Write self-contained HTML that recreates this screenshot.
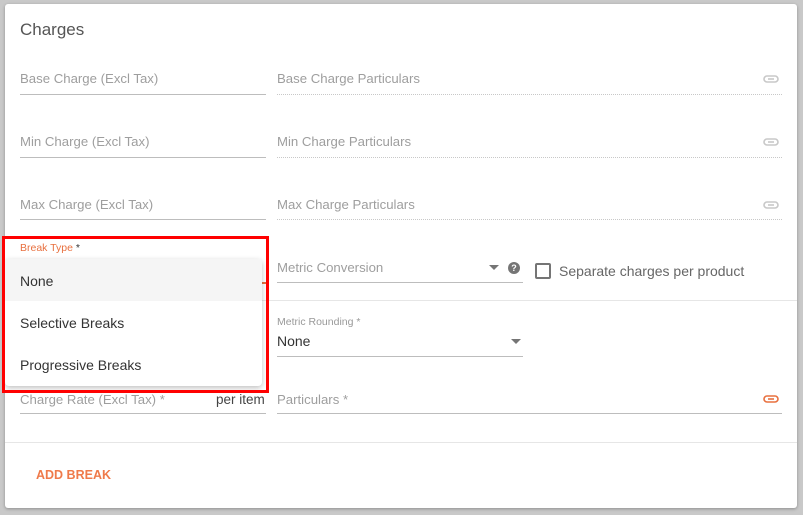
<!DOCTYPE html>
<html><head><style>
*{margin:0;padding:0;box-sizing:border-box}
body{width:803px;height:515px;background:#c9c9c9;font-family:"Liberation Sans",sans-serif;position:relative;overflow:hidden}
.card{position:absolute;left:5px;top:4px;width:792px;height:504px;background:#fff;border-radius:3px;box-shadow:0 1px 3px rgba(0,0,0,.3)}
.a{position:absolute;white-space:nowrap}
.lbl{font-size:13.2px;color:#9e9e9e}
.ul{position:absolute;height:1px;background:#bdbdbd}
.dot{position:absolute;height:1px;border-top:1px dotted #c8c8c8}
.hr{position:absolute;left:5px;width:792px;height:1px;background:#e6e6e6}
.link{position:absolute;width:16px;height:8px}
</style></head><body>
<div class="card"></div>
<div class="a" style="left:20px;top:20px;font-size:17px;color:#555">Charges</div>

<div class="a lbl" style="left:20px;top:71px">Base Charge (Excl Tax)</div>
<div class="ul" style="left:20px;top:94px;width:246px"></div>
<div class="a lbl" style="left:277px;top:71px">Base Charge Particulars</div>
<div class="dot" style="left:277px;top:94px;width:505px"></div>

<div class="a lbl" style="left:20px;top:134px">Min Charge (Excl Tax)</div>
<div class="ul" style="left:20px;top:157px;width:246px"></div>
<div class="a lbl" style="left:277px;top:134px">Min Charge Particulars</div>
<div class="dot" style="left:277px;top:157px;width:505px"></div>

<div class="a lbl" style="left:20px;top:197px">Max Charge (Excl Tax)</div>
<div class="ul" style="left:20px;top:219px;width:246px"></div>
<div class="a lbl" style="left:277px;top:197px">Max Charge Particulars</div>
<div class="dot" style="left:277px;top:219px;width:505px"></div>

<svg class="link" style="left:763px;top:75px" viewBox="0 0 16 8"><rect x="1" y="1" width="14" height="6" rx="3" fill="none" stroke="#c8c8c8" stroke-width="1.6"/><line x1="5" y1="4" x2="11" y2="4" stroke="#c8c8c8" stroke-width="1.6"/></svg>
<svg class="link" style="left:763px;top:138px" viewBox="0 0 16 8"><rect x="1" y="1" width="14" height="6" rx="3" fill="none" stroke="#c8c8c8" stroke-width="1.6"/><line x1="5" y1="4" x2="11" y2="4" stroke="#c8c8c8" stroke-width="1.6"/></svg>
<svg class="link" style="left:763px;top:201px" viewBox="0 0 16 8"><rect x="1" y="1" width="14" height="6" rx="3" fill="none" stroke="#c8c8c8" stroke-width="1.6"/><line x1="5" y1="4" x2="11" y2="4" stroke="#c8c8c8" stroke-width="1.6"/></svg>

<div class="a" style="left:20px;top:242px;font-size:10.5px;color:#e8703f">Break Type <span style="color:#333">*</span></div>
<div class="ul" style="left:20px;top:282px;width:246px;height:2px;background:#e8703f"></div>
<div class="a lbl" style="left:277px;top:260px">Metric Conversion</div>
<div class="ul" style="left:277px;top:282px;width:246px"></div>
<div class="a" style="left:489px;top:265px;width:0;height:0;border-left:5px solid transparent;border-right:5px solid transparent;border-top:5px solid #757575"></div>
<div class="a" style="left:508px;top:262px;width:12px;height:12px;border-radius:50%;background:#757575;color:#fff;font-size:9px;font-weight:bold;text-align:center;line-height:12px">?</div>
<div class="a" style="left:535px;top:263px;width:16px;height:16px;border:2px solid #757575;border-radius:2px"></div>
<div class="a" style="left:559px;top:263px;font-size:14px;color:#666">Separate charges per product</div>

<div class="hr" style="top:300px"></div>

<div class="a" style="left:277px;top:316px;font-size:10.5px;color:#999">Metric Rounding *</div>
<div class="a" style="left:277px;top:333px;font-size:14px;color:#333">None</div>
<div class="ul" style="left:277px;top:356px;width:246px"></div>
<div class="a" style="left:511px;top:339px;width:0;height:0;border-left:5px solid transparent;border-right:5px solid transparent;border-top:5px solid #757575"></div>

<div class="a lbl" style="left:20px;top:392px">Charge Rate (Excl Tax) *</div>
<div class="a" style="left:216px;top:392px;font-size:13.5px;color:#444">per item</div>
<div class="ul" style="left:20px;top:413px;width:246px"></div>
<div class="a lbl" style="left:277px;top:392px">Particulars *</div>
<div class="ul" style="left:277px;top:413px;width:505px"></div>
<svg class="link" style="left:763px;top:395px" viewBox="0 0 16 8"><rect x="1" y="1" width="14" height="6" rx="3" fill="none" stroke="#e8703f" stroke-width="1.6"/><line x1="5" y1="4" x2="11" y2="4" stroke="#e8703f" stroke-width="1.6"/></svg>

<div class="hr" style="top:442px"></div>
<div class="a" style="left:36px;top:468px;font-size:12.5px;font-weight:bold;color:#ef7a4a">ADD BREAK</div>

<div class="a" style="left:5px;top:259px;width:257px;height:127px;background:#fff;border-radius:4px;box-shadow:0 2px 6px rgba(0,0,0,.25)">
 <div style="height:42px;background:#f5f5f5;border-radius:4px 4px 0 0;padding:14px 0 0 15px;font-size:14px;color:#333">None</div>
 <div style="height:42px;padding:14px 0 0 15px;font-size:14px;color:#333">Selective Breaks</div>
 <div style="height:42px;padding:14px 0 0 15px;font-size:14px;color:#333">Progressive Breaks</div>
</div>
<div class="a" style="left:2px;top:236px;width:267px;height:157px;border:3px solid #f00"></div>
</body></html>
